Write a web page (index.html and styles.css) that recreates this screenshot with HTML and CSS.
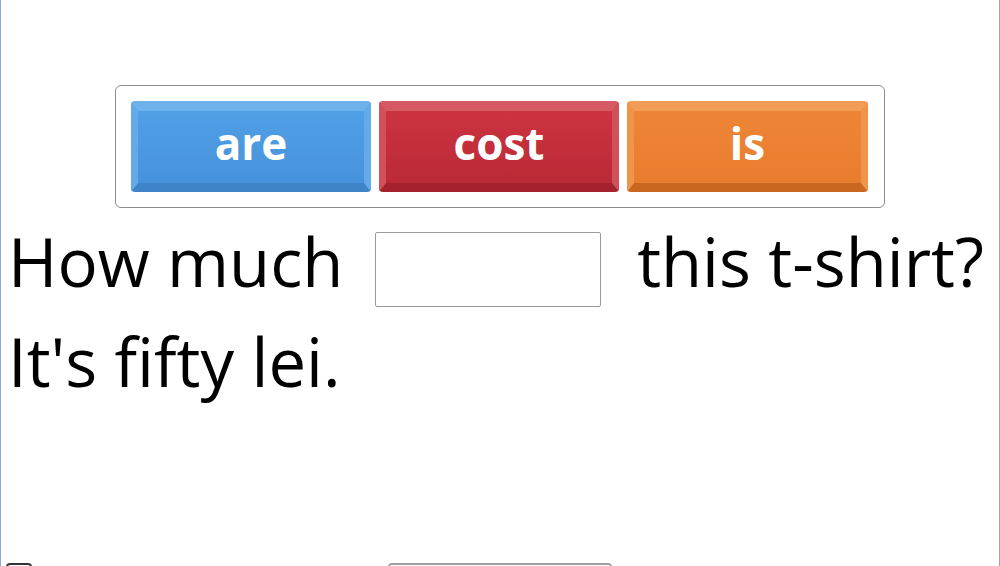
FILE: index.html
```html
<!DOCTYPE html>
<html lang="en">
<head>
<meta charset="utf-8">
<title>Fill in the blank</title>
<link rel="stylesheet" href="styles.css">
</head>
<body>
<div class="page">
  <div class="bank">
    <div class="tile tile-blue">are</div>
    <div class="tile tile-red">cost</div>
    <div class="tile tile-orange">is</div>
  </div>
  <div class="sentence">
    <p class="line">How much <span class="blank"></span> this t-shirt?</p>
    <p class="line">It's fifty lei.</p>
  </div>
  <div class="footer">
    <span class="check"></span>
    <span class="field"></span>
  </div>
</div>
</body>
</html>
```
FILE: styles.css
```css
html, body {
  margin: 0;
  padding: 0;
  background: #ffffff;
}
body {
  font-family: "Open Sans", "Noto Sans", sans-serif;
  overflow: hidden;
}
.page {
  box-sizing: border-box;
  width: 1000px;
  height: 566px;
  border-left: 1px solid #8aa6e2;
  border-right: 1px solid #8aa6e2;
  padding-top: 85px;
  overflow: hidden;
  position: relative;
}
.bank {
  box-sizing: border-box;
  width: 770px;
  margin: 0 0 0 114px;
  border: 1px solid #8c8c8c;
  border-radius: 6px;
  padding: 15px;
  display: flex;
  gap: 8px;
}
.tile {
  box-sizing: border-box;
  flex: 0 0 240px;
  height: 91px;
  border-style: solid;
  border-width: 10px 7px 9px 7px;
  border-radius: 4px;
  color: #ffffff;
  font-weight: 700;
  font-size: 44px;
  display: flex;
  align-items: center;
  justify-content: center;
  line-height: 1;
  padding-bottom: 8px;
}
.tile:last-child {
  flex-basis: 241px;
}
.tile-blue {
  background: linear-gradient(#50a0e6, #4792dc);
  border-color: #6db2ea #64aae8 #3f83c8 #64aae8;
}
.tile-red {
  background: linear-gradient(#cc3340, #bb2a36);
  border-color: #d65a64 #d1505a #a3222c #d1505a;
}
.tile-orange {
  background: linear-gradient(#ee8536, #e97d2f);
  border-color: #f29c55 #f0944a #c9661f #f0944a;
}
.sentence {
  margin-top: 3px;
  padding-left: 7px;
}
.line {
  margin: 0;
  font-size: 67px;
  line-height: 100px;
  color: #000000;
  white-space: nowrap;
}
.blank {
  display: inline-block;
  box-sizing: border-box;
  width: 226px;
  height: 75px;
  border: 1px solid #9a9a9a;
  border-radius: 2px;
  vertical-align: middle;
  margin: 0 19px 0 14px;
}
.footer {
  display: flex;
  align-items: flex-start;
  margin-top: 152px;
}
.check {
  box-sizing: border-box;
  width: 26px;
  height: 26px;
  margin-left: 5px;
  border: 2px solid #333333;
  border-radius: 4px;
}
.field {
  box-sizing: border-box;
  width: 224px;
  height: 40px;
  margin-left: 356px;
  border: 2px solid #a0a0a0;
  border-radius: 4px;
}
```
